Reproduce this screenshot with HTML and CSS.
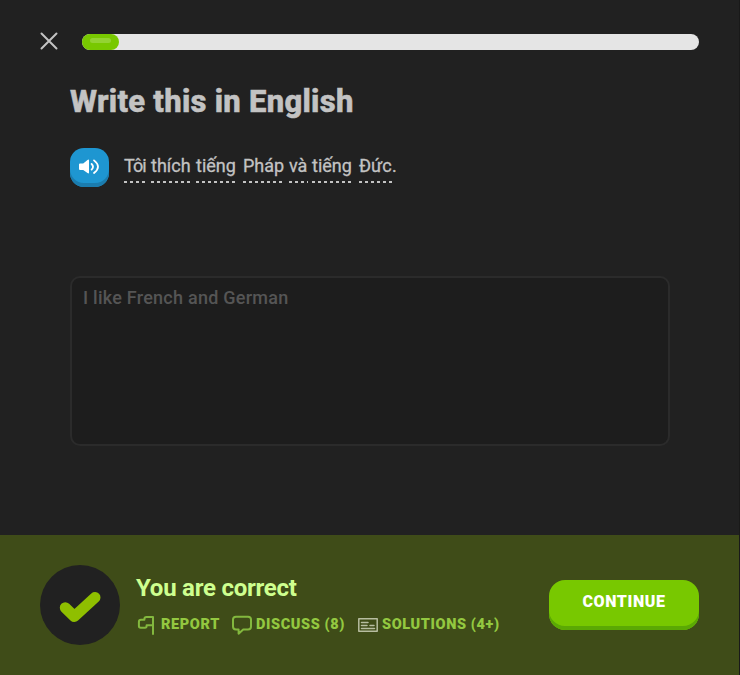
FILE: index.html
```
<!DOCTYPE html>
<html lang="en">
<head>
<meta charset="utf-8">
<title>Write this in English</title>
<link rel="stylesheet" href="styles.css">
</head>
<body>
<div class="app">
  <header class="top">
    <svg class="close" width="18" height="18" viewBox="0 0 18 18"><path d="M1.5 1.5 16.5 16.5M16.5 1.5 1.5 16.5"/></svg>
    <div class="progress"><div class="fill"><div class="shine"></div></div></div>
  </header>
  <main class="challenge">
    <h1 class="title">Write this in English</h1>
    <div class="prompt">
      <button class="speaker" aria-label="Listen">
        <svg width="22" height="18" viewBox="0 0 22 18"><path class="cone" d="M2 5.5H5.2L9.5 1.9Q11 .9 11 2.4V14.6Q11 16.1 9.5 15.1L5.2 12H2Q1 12 1 11V6.5Q1 5.5 2 5.5Z"/><path class="wave" d="M13.6 6Q16.4 8.8 13.6 11.6M16 2.4Q24 8.7 16 15"/></svg>
      </button>
      <p class="sentence"><span class="word w1">Tôi</span><span class="word w2">thích</span><span class="word w3">tiếng</span><span class="word w4">Pháp</span><span class="word w5">và</span><span class="word w6">tiếng</span><span class="word w7">Đức</span><span class="stop">.</span></p>
    </div>
    <div class="answer">I like French and German</div>
  </main>
  <footer class="result">
    <div class="badge"><svg width="80" height="80" viewBox="0 0 80 80"><path d="M25.3 42.7 34.3 51.5 55 32.5"/></svg></div>
    <div class="message">
      <h2 class="verdict">You are correct</h2>
      <div class="links">
        <a class="link report"><svg width="18" height="20" viewBox="0 0 18 20"><path d="M17 19V1.9H10.5Q8.4 1.9 8.4 4V4.7H5Q2.9 4.7 2.9 6.7V11Q2.9 12.8 4.7 12.8H9Q10.6 12.8 10.6 11.1V10.2H17"/></svg><span>REPORT</span></a>
        <a class="link discuss"><svg width="20" height="20" viewBox="0 0 20 20"><path d="M4 1.7H16Q19 1.7 19 4.5V11.5Q19 14.5 16 14.5H11.2L6.6 18.7V14.5H4Q1 14.5 1 11.5V4.5Q1 1.7 4 1.7Z"/></svg><span>DISCUSS (8)</span></a>
        <a class="link solutions"><svg class="card" width="20" height="14" viewBox="0 0 20 14"><path d="M.8.8H19.2V13.2H.8ZM3.5 4.5H10M3.5 7.5H9M12 7.5H16M3.5 10.5H16.5"/></svg><span>SOLUTIONS (4+)</span></a>
      </div>
    </div>
    <button class="continue">CONTINUE</button>
  </footer>
</div>
</body>
</html>
```
FILE: styles.css
```
* { box-sizing: border-box; }
body { margin: 0; background: #191919; font-family: Roboto, "Noto Sans", sans-serif; }
button { border: 0; padding: 0; font-family: inherit; }
h1, h2, p { margin: 0; }
.app { width: 739px; height: 675px; display: flex; flex-direction: column; background: #212121; }
.top { display: flex; align-items: center; gap: 24px; padding: 32px 40px 0; height: 51px; }
.close { flex: none; margin-top: -1px; fill: none; stroke: #c3c3c3; stroke-width: 2; stroke-linecap: round; }
.progress { flex: 1; height: 16px; border-radius: 8px; background: #e5e5e5; }
.fill { width: 37px; height: 16px; border-radius: 8px; background: #78c800; padding: 4px 8px; }
.shine { height: 5px; width: 21px; border-radius: 3px; background: #93d333; }
.challenge { flex: 1; padding: 31px 69px 0 70px; color: #c3c3c3; }
.title { font-size: 31px; line-height: 40px; font-weight: 800; letter-spacing: .27px; -webkit-text-stroke: .5px; white-space: nowrap; }
.prompt { display: flex; margin-top: 26px; height: 39px; }
.speaker { width: 39px; height: 39px; border-radius: 14px; background: #1e96d1; box-shadow: inset 0 -4px #1b7cae; display: grid; place-items: center; }
.speaker svg { margin: 0 0 2px -1px; }
.cone { fill: #fff; }
.wave { fill: none; stroke: #fff; stroke-width: 1.8; stroke-linecap: round; }
.sentence { display: flex; margin-left: 15px; font-size: 18px; line-height: 35px; -webkit-text-stroke: .3px; white-space: nowrap; }
.word { height: 35px; background: repeating-linear-gradient(90deg, #c3c3c3 0 3px, transparent 3px 6px) bottom / 100% 2px no-repeat; }
.w1 { width: 22px; margin-right: 5px; letter-spacing: -.9px; }
.w2 { width: 39px; margin-right: 6px; }
.w3 { width: 40px; margin-right: 7px; }
.w4 { width: 39px; margin-right: 7px; }
.w5 { width: 19px; margin-right: 4px; }
.w6 { width: 40px; margin-right: 7px; }
.w7 { width: 33px; }
.answer { margin-top: 89px; width: 600px; height: 170px; border: 2px solid #2b2b2b; border-radius: 10px; background: #1d1d1d; padding: 9px 11px; font-size: 18px; line-height: 22px; font-weight: 500; letter-spacing: .25px; color: #555; }
.result { height: 140px; background: #3f4c18; display: flex; align-items: center; padding: 0 40px; }
.badge { width: 80px; height: 80px; border-radius: 50%; background: #212121; }
.badge path { fill: none; stroke: #8fbf00; stroke-width: 11; stroke-linecap: round; stroke-linejoin: round; }
.message { flex: 1; margin-left: 16px; padding-bottom: 2px; }
.verdict { font-size: 24px; line-height: 32px; font-weight: 700; letter-spacing: -.25px; color: #ceff8f; white-space: nowrap; }
.links { display: flex; margin-top: 9px; height: 24px; }
.link { display: flex; align-items: center; font-size: 14.5px; line-height: 24px; font-weight: 900; letter-spacing: .6px; color: #93c840; white-space: nowrap; }
.link svg { flex: none; fill: none; stroke: #83b83e; stroke-width: 2; stroke-linejoin: round; stroke-linecap: round; }
.report { width: 96px; gap: 7px; }
.discuss { width: 126px; gap: 4px; }
.solutions { gap: 4px; }
.link .card { stroke: #b7bda0; stroke-width: 1.5; }
.continue { width: 150px; height: 50px; padding-bottom: 7px; border-radius: 16px; background: #78c800; box-shadow: inset 0 -4px #5ba904; color: #fff; font-size: 16px; font-weight: 900; letter-spacing: .6px; }
```
